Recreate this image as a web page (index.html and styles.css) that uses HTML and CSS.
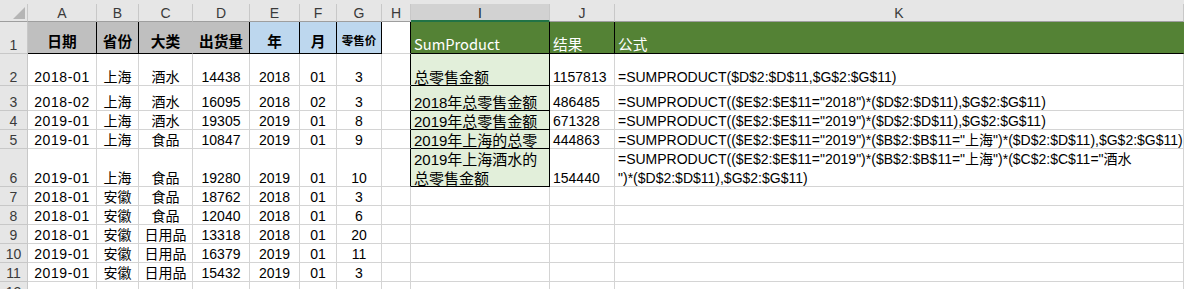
FILE: index.html
```html
<!DOCTYPE html>
<html lang="zh">
<head>
<meta charset="utf-8">
<title>SumProduct</title>
<link rel="stylesheet" href="styles.css">
</head>
<body>
<div class="topstrip"></div>
<div class="sheet">
  <!-- column headers -->
  <div class="h corner"><svg class="tri" width="12" height="12" viewBox="0 0 12 12"><polygon points="12,0 12,12 0,12" fill="#b5b5b5"/></svg></div>
  <div class="h">A</div><div class="h">B</div><div class="h">C</div><div class="h">D</div><div class="h">E</div><div class="h">F</div><div class="h">G</div><div class="h">H</div><div class="h sel">I</div><div class="h">J</div><div class="h">K</div>

  <!-- row 1 -->
  <div class="rh"><span>1</span></div>
  <div class="c hd gray bkr bkb">日期</div>
  <div class="c hd gray bkr bkb">省份</div>
  <div class="c hd gray bkb">大类</div>
  <div class="c hd gray bkr bkb">出货量</div>
  <div class="c hd blue bkr bkb">年</div>
  <div class="c hd blue bkr bkb">月</div>
  <div class="c hd blue bkr bkb small">零售价</div>
  <div class="c bkr"></div>
  <div class="c th green bkr bkb"><span>SumProduct</span></div>
  <div class="c th green bkr bkb"><span>结果</span></div>
  <div class="c th green bkb"><span>公式</span></div>

  <!-- row 2 -->
  <div class="rh"><span>2</span></div>
  <div class="c ctr"><span class="dt">2018-01</span></div>
  <div class="c ctr"><span>上海</span></div>
  <div class="c ctr"><span>酒水</span></div>
  <div class="c ctr"><span>14438</span></div>
  <div class="c ctr"><span>2018</span></div>
  <div class="c ctr"><span>01</span></div>
  <div class="c ctr"><span>3</span></div>
  <div class="c bkr"></div>
  <div class="c lft lg bkr bkb name"><span>总零售金额</span></div>
  <div class="c lft"><span>1157813</span></div>
  <div class="c lft"><span class="fx">=SUMPRODUCT($D$2:$D$11,$G$2:$G$11)</span></div>

  <!-- row 3 -->
  <div class="rh"><span>3</span></div>
  <div class="c ctr"><span class="dt">2018-02</span></div>
  <div class="c ctr"><span>上海</span></div>
  <div class="c ctr"><span>酒水</span></div>
  <div class="c ctr"><span>16095</span></div>
  <div class="c ctr"><span>2018</span></div>
  <div class="c ctr"><span>02</span></div>
  <div class="c ctr"><span>3</span></div>
  <div class="c bkr"></div>
  <div class="c lft lg bkr bkb name"><span>2018年总零售金额</span></div>
  <div class="c lft"><span>486485</span></div>
  <div class="c lft"><span class="fx">=SUMPRODUCT(($E$2:$E$11="2018")*($D$2:$D$11),$G$2:$G$11)</span></div>

  <!-- row 4 -->
  <div class="rh"><span>4</span></div>
  <div class="c ctr"><span class="dt">2019-01</span></div>
  <div class="c ctr"><span>上海</span></div>
  <div class="c ctr"><span>酒水</span></div>
  <div class="c ctr"><span>19305</span></div>
  <div class="c ctr"><span>2019</span></div>
  <div class="c ctr"><span>01</span></div>
  <div class="c ctr"><span>8</span></div>
  <div class="c bkr"></div>
  <div class="c lft lg bkr bkb name"><span>2019年总零售金额</span></div>
  <div class="c lft"><span>671328</span></div>
  <div class="c lft"><span class="fx">=SUMPRODUCT(($E$2:$E$11="2019")*($D$2:$D$11),$G$2:$G$11)</span></div>

  <!-- row 5 -->
  <div class="rh"><span>5</span></div>
  <div class="c ctr"><span class="dt">2019-01</span></div>
  <div class="c ctr"><span>上海</span></div>
  <div class="c ctr"><span>食品</span></div>
  <div class="c ctr"><span>10847</span></div>
  <div class="c ctr"><span>2019</span></div>
  <div class="c ctr"><span>01</span></div>
  <div class="c ctr"><span>9</span></div>
  <div class="c bkr"></div>
  <div class="c lft lg bkr bkb name"><span class="cut">2019年上海的总零售金额</span></div>
  <div class="c lft"><span>444863</span></div>
  <div class="c lft"><span class="fx">=SUMPRODUCT(($E$2:$E$11="2019")*($B$2:$B$11="上海")*($D$2:$D$11),$G$2:$G$11)</span></div>

  <!-- row 6 -->
  <div class="rh"><span>6</span></div>
  <div class="c ctr"><span class="dt">2019-01</span></div>
  <div class="c ctr"><span>上海</span></div>
  <div class="c ctr"><span>食品</span></div>
  <div class="c ctr"><span>19280</span></div>
  <div class="c ctr"><span>2019</span></div>
  <div class="c ctr"><span>01</span></div>
  <div class="c ctr"><span>10</span></div>
  <div class="c bkr"></div>
  <div class="c lft lg bkr bkb name"><span>2019年上海酒水的<br>总零售金额</span></div>
  <div class="c lft"><span>154440</span></div>
  <div class="c lft"><span class="fx">=SUMPRODUCT(($E$2:$E$11="2019")*($B$2:$B$11="上海")*($C$2:$C$11="酒水<br>")*($D$2:$D$11),$G$2:$G$11)</span></div>

  <!-- row 7 -->
  <div class="rh"><span>7</span></div>
  <div class="c ctr"><span class="dt">2018-01</span></div>
  <div class="c ctr"><span>安徽</span></div>
  <div class="c ctr"><span>食品</span></div>
  <div class="c ctr"><span>18762</span></div>
  <div class="c ctr"><span>2018</span></div>
  <div class="c ctr"><span>01</span></div>
  <div class="c ctr"><span>3</span></div>
  <div class="c"></div><div class="c"></div><div class="c"></div><div class="c"></div>

  <!-- row 8 -->
  <div class="rh"><span>8</span></div>
  <div class="c ctr"><span class="dt">2018-01</span></div>
  <div class="c ctr"><span>安徽</span></div>
  <div class="c ctr"><span>食品</span></div>
  <div class="c ctr"><span>12040</span></div>
  <div class="c ctr"><span>2018</span></div>
  <div class="c ctr"><span>01</span></div>
  <div class="c ctr"><span>6</span></div>
  <div class="c"></div><div class="c"></div><div class="c"></div><div class="c"></div>

  <!-- row 9 -->
  <div class="rh"><span>9</span></div>
  <div class="c ctr"><span class="dt">2018-01</span></div>
  <div class="c ctr"><span>安徽</span></div>
  <div class="c ctr"><span>日用品</span></div>
  <div class="c ctr"><span>13318</span></div>
  <div class="c ctr"><span>2018</span></div>
  <div class="c ctr"><span>01</span></div>
  <div class="c ctr"><span>20</span></div>
  <div class="c"></div><div class="c"></div><div class="c"></div><div class="c"></div>

  <!-- row 10 -->
  <div class="rh"><span>10</span></div>
  <div class="c ctr"><span class="dt">2019-01</span></div>
  <div class="c ctr"><span>安徽</span></div>
  <div class="c ctr"><span>日用品</span></div>
  <div class="c ctr"><span>16379</span></div>
  <div class="c ctr"><span>2019</span></div>
  <div class="c ctr"><span>01</span></div>
  <div class="c ctr"><span>11</span></div>
  <div class="c"></div><div class="c"></div><div class="c"></div><div class="c"></div>

  <!-- row 11 -->
  <div class="rh"><span>11</span></div>
  <div class="c ctr"><span class="dt">2019-01</span></div>
  <div class="c ctr"><span>安徽</span></div>
  <div class="c ctr"><span>日用品</span></div>
  <div class="c ctr"><span>15432</span></div>
  <div class="c ctr"><span>2019</span></div>
  <div class="c ctr"><span>01</span></div>
  <div class="c ctr"><span>3</span></div>
  <div class="c"></div><div class="c"></div><div class="c"></div><div class="c"></div>

  <!-- row 12 -->
  <div class="rh"><span>12</span></div>
  <div class="c"></div><div class="c"></div><div class="c"></div><div class="c"></div><div class="c"></div><div class="c"></div><div class="c"></div><div class="c"></div><div class="c"></div><div class="c"></div><div class="c"></div>
</div>
</body>
</html>
```

FILE: styles.css
```css
html, body {
  margin: 0;
  padding: 0;
  background: #ffffff;
  overflow: hidden;
}
body {
  font-family: "Liberation Sans", "Noto Sans CJK SC", sans-serif;
  font-size: 14px;
  color: #000;
}
.topstrip {
  height: 4px;
  background: #e6e6e6;
}
.sheet {
  display: grid;
  grid-template-columns: 28px 69px 42px 54px 57px 50px 37px 45px 29px 139px 65px 569px;
  grid-template-rows: 18px 32px 32px 25px 19px 19px 38px 19px 19px 19px 19px 19px 19px;
}
.h {
  background: #e6e6e6;
  border-right: 1px solid #c8c8c8;
  border-bottom: 1px solid #9e9e9e;
  display: flex;
  align-items: center;
  justify-content: center;
  color: #3a3a3a;
  font-size: 14px;
  padding-top: 1px;
  box-sizing: border-box;
}
.h.sel {
  background: #d2d2d2;
  border-bottom: 2px solid #217346;
  color: #222;
}
.corner {
  justify-content: flex-end;
  align-items: flex-end;
  padding: 0 2px 2px 0;
}
.tri { display: block; }
.rh {
  background: #e6e6e6;
  border-right: 1px solid #c8c8c8;
  border-bottom: 1px solid #c8c8c8;
  display: flex;
  align-items: flex-end;
  justify-content: center;
  color: #3a3a3a;
  font-size: 14px;
  box-sizing: border-box;
}
.rh span { line-height: 19px; margin-bottom: -2px; }
.c {
  border-right: 1px solid #d4d4d4;
  border-bottom: 1px solid #d4d4d4;
  display: flex;
  align-items: flex-end;
  white-space: nowrap;
  min-width: 0;
  box-sizing: border-box;
}
.c > span { line-height: 19px; margin-bottom: -2px; }
.ctr { justify-content: center; }
.lft { padding-left: 3px; }
.name { font-size: 15px; }
/* Excel-style clipping: glyphs that don't fully fit are hidden */
.c > .cut {
  display: block;
  width: 100%;
  height: 19px;
  overflow: hidden;
  white-space: normal;
  word-break: break-all;
}
.dt { letter-spacing: 0.6px; }

.hd {
  font-family: "Noto Sans CJK SC", sans-serif;
  font-weight: 700;
  font-size: 14.7px;
  justify-content: center;
  align-items: center;
  padding-top: 5px;
}
.small { font-size: 11.5px; }
.th {
  font-family: "Noto Sans CJK SC", sans-serif;
  font-size: 14.7px;
  color: #fff;
  padding-left: 3px;
}
.th > span { margin-bottom: 0; }
.gray { background: #bfbfbf; border-right-color: #bfbfbf; border-bottom-color: #bfbfbf; }
.blue { background: #bdd7ee; border-right-color: #bdd7ee; border-bottom-color: #bdd7ee; }
.green { background: #548235; border-right-color: #548235; border-bottom-color: #548235; }
.lg { background: #e2efda; }
.bkr { border-right-color: #000; }
.bkb { border-bottom-color: #000; }
```
